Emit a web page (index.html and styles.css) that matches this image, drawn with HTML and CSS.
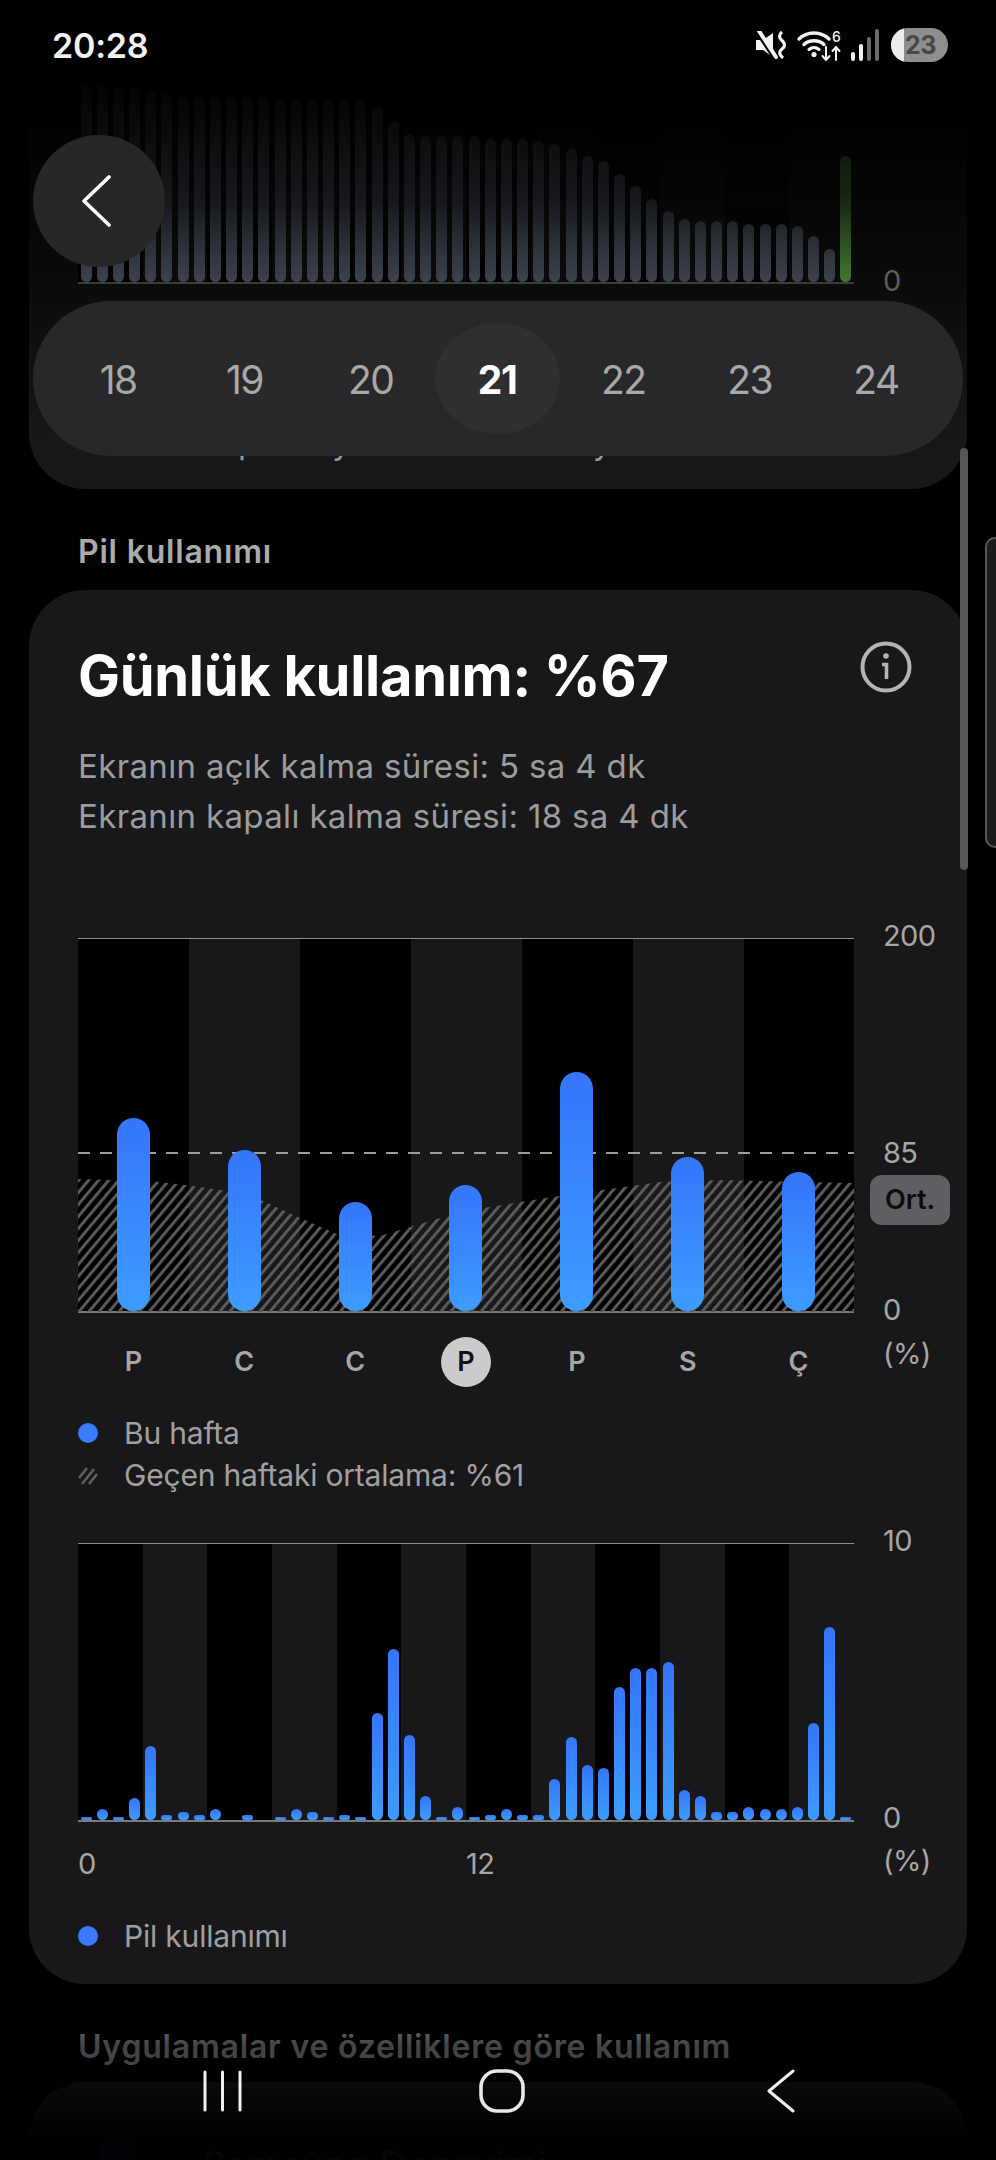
FILE: index.html

```html
<!DOCTYPE html>
<html lang="tr">
<head>
  <meta charset="utf-8">
  <title>Pil kullanımı</title>
  <link rel="stylesheet" href="styles.css">
</head>
<body>
<div class="screen">

  <!-- card scrolled up under the overlays -->
  <section class="summary-card">
    <div class="chart">
      <div class="plot-faded">
        <div class="bars bars-48">
          <i class="bar-grey" style="height:198px"></i><i class="bar-grey" style="height:198px"></i><i class="bar-grey" style="height:196px"></i><i class="bar-grey" style="height:196px"></i>
          <i class="bar-grey" style="height:191px"></i><i class="bar-grey" style="height:188px"></i><i class="bar-grey" style="height:186px"></i><i class="bar-grey" style="height:186px"></i>
          <i class="bar-grey" style="height:186px"></i><i class="bar-grey" style="height:186px"></i><i class="bar-grey" style="height:186px"></i><i class="bar-grey" style="height:186px"></i>
          <i class="bar-grey" style="height:183px"></i><i class="bar-grey" style="height:183px"></i><i class="bar-grey" style="height:183px"></i><i class="bar-grey" style="height:183px"></i>
          <i class="bar-grey" style="height:183px"></i><i class="bar-grey" style="height:181px"></i><i class="bar-grey" style="height:176px"></i><i class="bar-grey" style="height:161px"></i>
          <i class="bar-grey" style="height:148px"></i><i class="bar-grey" style="height:146px"></i><i class="bar-grey" style="height:146px"></i><i class="bar-grey" style="height:146px"></i>
          <i class="bar-grey" style="height:146px"></i><i class="bar-grey" style="height:143px"></i><i class="bar-grey" style="height:143px"></i><i class="bar-grey" style="height:143px"></i>
          <i class="bar-grey" style="height:141px"></i><i class="bar-grey" style="height:138px"></i><i class="bar-grey" style="height:133px"></i><i class="bar-grey" style="height:126px"></i>
          <i class="bar-grey" style="height:121px"></i><i class="bar-grey" style="height:108px"></i><i class="bar-grey" style="height:96px"></i><i class="bar-grey" style="height:83px"></i>
          <i class="bar-grey" style="height:71px"></i><i class="bar-grey" style="height:63px"></i><i class="bar-grey" style="height:61px"></i><i class="bar-grey" style="height:61px"></i>
          <i class="bar-grey" style="height:61px"></i><i class="bar-grey" style="height:58px"></i><i class="bar-grey" style="height:58px"></i><i class="bar-grey" style="height:58px"></i>
          <i class="bar-grey" style="height:56px"></i><i class="bar-grey" style="height:46px"></i><i class="bar-grey" style="height:33px"></i><i class="bar-green" style="height:126px"></i>
        </div>
      </div>
      <div class="summary-line"></div>
      <span class="tick tick-summary">0</span>
    </div>
    <p class="peek-line"><span class="peek-p">p</span><span class="peek-y1">y</span><span class="peek-y2">y</span></p>
  </section>

  <h2 class="section-title">Pil kullanımı</h2>

  <section class="usage-card">
    <div class="usage-head">
      <h1 class="usage-title">Günlük kullanım: %67</h1>
      <svg class="info-icon" viewBox="0 0 52 52" fill="none" stroke="#b4b4b4">
        <circle cx="26" cy="26" r="23.5" stroke-width="4"/>
        <path d="M22 23.5H26.5V38" stroke-width="3.6"/>
        <circle cx="26" cy="15" r="2.8" fill="#b4b4b4" stroke="none"/>
      </svg>
    </div>
    <p class="usage-line">Ekranın açık kalma süresi: 5 sa 4 dk</p>
    <p class="usage-line">Ekranın kapalı kalma süresi: 18 sa 4 dk</p>

    <!-- weekly chart -->
    <div class="chart week-chart">
      <div class="plot plot-week">
        <svg class="hatch-area" viewBox="0 0 776 373">
          <defs>
            <pattern id="hatch" width="7.7" height="10" patternUnits="userSpaceOnUse" patternTransform="rotate(40)">
              <rect width="3" height="10" fill="#5a5a5a"/>
            </pattern>
          </defs>
          <path fill="url(#hatch)" d="M0 240L72 242L115 247L149 252L185 262L222 279L259 295L302 297L359 280L405 269L481 257L582 243L640 241L776 244V373H0Z"/>
        </svg>
        <div class="dash-line"></div>
        <div class="bars bars-7">
          <i class="bar-blue" style="height:193px"></i>
          <i class="bar-blue" style="height:161px"></i>
          <i class="bar-blue" style="height:109px"></i>
          <i class="bar-blue" style="height:126px"></i>
          <i class="bar-blue" style="height:239px"></i>
          <i class="bar-blue" style="height:154px"></i>
          <i class="bar-blue" style="height:139px"></i>
        </div>
      </div>
      <span class="tick tick-200">200</span>
      <span class="tick tick-85">85</span>
      <span class="avg-badge">Ort.</span>
      <span class="tick tick-w0">0</span>
      <span class="tick tick-wpct">(%)</span>
      <div class="day-row">
        <span class="day">P</span>
        <span class="day">C</span>
        <span class="day">C</span>
        <span class="day day-today">P</span>
        <span class="day">P</span>
        <span class="day">S</span>
        <span class="day">Ç</span>
      </div>
    </div>

    <ul class="legend legend-week">
      <li><span class="dot"></span>Bu hafta</li>
      <li>
        <svg class="hatch-key" viewBox="0 0 20 20" fill="none" stroke="#5f5f5f" stroke-width="2.6">
          <path d="M1 13L9 3M4 19L16 4M11 19L19 9"/>
        </svg>
        Geçen haftaki ortalama: %61
      </li>
    </ul>

    <!-- hourly chart -->
    <div class="chart day-chart">
      <div class="plot plot-day">
        <div class="bars bars-48">
          <i class="bar-blue" style="height:3px"></i><i class="bar-blue" style="height:11px"></i><i class="bar-blue" style="height:3px"></i><i class="bar-blue" style="height:22px"></i>
          <i class="bar-blue" style="height:74px"></i><i class="bar-blue" style="height:5px"></i><i class="bar-blue" style="height:8px"></i><i class="bar-blue" style="height:5px"></i>
          <i class="bar-blue" style="height:11px"></i><i class="bar-blue" style="height:0"></i><i class="bar-blue" style="height:5px"></i><i class="bar-blue" style="height:0"></i>
          <i class="bar-blue" style="height:3px"></i><i class="bar-blue" style="height:11px"></i><i class="bar-blue" style="height:8px"></i><i class="bar-blue" style="height:3px"></i>
          <i class="bar-blue" style="height:5px"></i><i class="bar-blue" style="height:3px"></i><i class="bar-blue" style="height:107px"></i><i class="bar-blue" style="height:171px"></i>
          <i class="bar-blue" style="height:85px"></i><i class="bar-blue" style="height:24px"></i><i class="bar-blue" style="height:3px"></i><i class="bar-blue" style="height:13px"></i>
          <i class="bar-blue" style="height:3px"></i><i class="bar-blue" style="height:5px"></i><i class="bar-blue" style="height:11px"></i><i class="bar-blue" style="height:5px"></i>
          <i class="bar-blue" style="height:5px"></i><i class="bar-blue" style="height:41px"></i><i class="bar-blue" style="height:83px"></i><i class="bar-blue" style="height:55px"></i>
          <i class="bar-blue" style="height:52px"></i><i class="bar-blue" style="height:133px"></i><i class="bar-blue" style="height:152px"></i><i class="bar-blue" style="height:152px"></i>
          <i class="bar-blue" style="height:158px"></i><i class="bar-blue" style="height:30px"></i><i class="bar-blue" style="height:24px"></i><i class="bar-blue" style="height:8px"></i>
          <i class="bar-blue" style="height:8px"></i><i class="bar-blue" style="height:13px"></i><i class="bar-blue" style="height:11px"></i><i class="bar-blue" style="height:11px"></i>
          <i class="bar-blue" style="height:13px"></i><i class="bar-blue" style="height:97px"></i><i class="bar-blue" style="height:193px"></i><i class="bar-blue" style="height:3px"></i>
        </div>
      </div>
      <span class="tick tick-10">10</span>
      <span class="tick tick-d0">0</span>
      <span class="tick tick-dpct">(%)</span>
      <div class="hour-row">
        <span class="hour">0</span>
        <span class="hour">12</span>
      </div>
    </div>

    <ul class="legend legend-day">
      <li><span class="dot"></span>Pil kullanımı</li>
    </ul>
  </section>

  <h2 class="section-title section-title-next">Uygulamalar ve özelliklere göre kullanım</h2>

  <section class="apps-card">
    <span class="app-icon"></span>
    <span class="app-name">Samsung Deneyimi</span>
  </section>

  <!-- overlays -->
  <div class="bottom-fade"></div>

  <div class="status-bar">
    <span class="clock">20:28</span>
    <div class="status-icons">
      <svg class="ic-mute" viewBox="0 0 32 28">
        <path d="M1 9H8L18 2V26L8 19H1Z" fill="#f2f2f2"/>
        <path d="M0 -3L20 27" stroke="#000" stroke-width="5"/>
        <path d="M4 0L21 26" stroke="#f2f2f2" stroke-width="4" stroke-linecap="round"/>
        <path d="M27 1Q22 5 27 9.5T27 18Q22 22 28 27" fill="none" stroke="#f2f2f2" stroke-width="3.2"/>
      </svg>
      <svg class="ic-wifi" viewBox="0 0 44 32" fill="none" stroke="#f2f2f2" stroke-linecap="round">
        <path d="M2 10C10 2 24 2 32 10" stroke-width="3.4"/>
        <path d="M7 15.5C12.5 10.5 21.5 10.5 27 15.5" stroke-width="3.4"/>
        <path d="M12 20.5C15 18 19 18 22 20.5" stroke-width="3.2"/>
        <circle cx="17" cy="25.5" r="2.6" fill="#f2f2f2" stroke="none"/>
        <path d="M29 18V31M25.5 27L29 31L32.5 27" stroke-width="2"/>
        <path d="M39 31V18M35.5 22L39 18L42.5 22" stroke-width="2"/>
        <text class="wifi-six" x="35" y="13">6</text>
      </svg>
      <svg class="ic-signal" viewBox="0 0 28 32">
        <rect x="0" y="23" width="4" height="9" rx="2" fill="#f2f2f2"/>
        <rect x="8" y="15" width="4" height="17" rx="2" fill="#f2f2f2"/>
        <rect x="16" y="8" width="4" height="24" rx="2" fill="#6a6a6a"/>
        <rect x="24" y="0" width="4" height="32" rx="2" fill="#6a6a6a"/>
      </svg>
      <div class="battery"><span class="battery-fill"></span><span class="battery-num">23</span></div>
    </div>
  </div>

  <button class="back-btn">
    <svg viewBox="0 0 30 52" fill="none" stroke="#fff" stroke-width="3.6" stroke-linecap="round" stroke-linejoin="round">
      <path d="M27 2L2 26L27 50"/>
    </svg>
  </button>

  <div class="date-pill">
    <span class="date">18</span>
    <span class="date">19</span>
    <span class="date">20</span>
    <span class="date date-active">21</span>
    <span class="date">22</span>
    <span class="date">23</span>
    <span class="date">24</span>
  </div>

  <div class="scrollbar"></div>
  <div class="edge-handle"></div>

  <div class="nav-bar">
    <svg class="nav-recent" viewBox="0 0 39 42" stroke="#f0f0f0" stroke-width="3" stroke-linecap="round">
      <path d="M2 2V40M19.5 2V40M37 2V40"/>
    </svg>
    <svg class="nav-home" viewBox="0 0 46 44" fill="none" stroke="#e8e8e8" stroke-width="3.6">
      <rect x="2" y="2" width="42" height="40" rx="16"/>
    </svg>
    <svg class="nav-back" viewBox="0 0 28 44" fill="none" stroke="#f0f0f0" stroke-width="3" stroke-linecap="round" stroke-linejoin="round">
      <path d="M26 2L2 22L26 42"/>
    </svg>
  </div>
</div>
</body>
</html>
```

FILE: styles.css

```css
* {
  margin: 0;
  padding: 0;
  box-sizing: border-box;
}

body {
  background: #000;
  font-family: Inter, Roboto, "Liberation Sans", sans-serif;
}

.screen {
  position: relative;
  width: 996px;
  height: 2160px;
  overflow: hidden;
  background: #000;
}

/* cards */
.summary-card {
  height: 489px;
  margin: 0 29px;
  padding: 84px 49px 0;
  border-radius: 0 0 56px 56px;
  background: linear-gradient(to bottom, #000 100px, #0b0b0c 285px, #171719 440px);
}

.usage-card {
  height: 1394px;
  margin: 0 29px;
  padding: 54px 49px 0;
  border-radius: 56px;
  background: #18181a;
}

.apps-card {
  display: flex;
  align-items: flex-start;
  gap: 66px;
  height: 200px;
  margin: 17px 29px 0;
  padding: 58px 0 0 69px;
  border-radius: 56px;
  background: #18181a;
}

.app-icon {
  width: 38px;
  height: 38px;
  border-radius: 12px;
  background: #1f3f90;
}

.app-name {
  font-size: 38px;
  line-height: 50px;
  color: #888;
}

.section-title {
  margin: 45px 0 20px 78px;
  font-size: 32px;
  line-height: 36px;
  font-weight: 600;
  letter-spacing: 0.8px;
  color: #ababab;
}

.section-title-next {
  margin: 45px 0 0 78px;
}

.peek-line {
  display: flex;
  margin-top: 138px;
  font-size: 33px;
  line-height: 40px;
  color: #999;
}

.peek-p { margin-left: 160px; }
.peek-y1 { margin-left: 74px; }
.peek-y2 { margin-left: 242px; }

/* title block */
.usage-head {
  display: flex;
  justify-content: space-between;
  align-items: flex-start;
  margin-bottom: 33px;
}

.usage-title {
  font-size: 56px;
  line-height: 64px;
  font-weight: 700;
  letter-spacing: -0.3px;
  color: #fff;
}

.info-icon {
  width: 52px;
  height: 52px;
  margin: -3px 6px 0 0;
}

.usage-line {
  font-size: 33px;
  line-height: 50px;
  letter-spacing: 0.35px;
  color: #9c9c9c;
}

/* charts */
.chart {
  position: relative;
  width: 776px;
}

.plot-faded {
  height: 198px;
  background: repeating-linear-gradient(90deg, #000 0 64.67px, transparent 64.67px 129.33px);
  -webkit-mask-image: linear-gradient(to bottom, rgba(0, 0, 0, 0.05), rgba(0, 0, 0, 0.3) 60%, #000);
  mask-image: linear-gradient(to bottom, rgba(0, 0, 0, 0.05), rgba(0, 0, 0, 0.3) 60%, #000);
}

.plot-faded .bars {
  height: 100%;
}

.summary-line {
  height: 1.5px;
  background: #3c3c3c;
}

.plot {
  position: relative;
  border-top: 1.5px solid #8c8c8c;
  border-bottom: 2px solid #7a7a7a;
}

.plot-week {
  height: 375px;
  background: repeating-linear-gradient(90deg, #000 0 111px, transparent 111px 222px);
}

.plot-day {
  height: 279px;
  background: repeating-linear-gradient(90deg, #000 0 64.67px, transparent 64.67px 129.33px);
}

.week-chart {
  margin-top: 97px;
}

.day-chart {
  margin-top: 47px;
}

.bars {
  position: relative;
  display: grid;
  align-items: end;
  justify-items: center;
  height: 100%;
}

.bars-48 {
  grid-template-columns: repeat(48, 1fr);
}

.bars-7 {
  grid-template-columns: repeat(7, 1fr);
}

.bars-48 i {
  width: 11px;
  border-radius: 6px;
}

.bars-7 i {
  width: 33px;
  border-radius: 17px;
}

.bar-grey {
  background: #3c434f;
}

.bar-green {
  background: #42782f;
}

.bar-blue {
  background: linear-gradient(to bottom, #3575fb, #3d9cff);
}

.hatch-area {
  position: absolute;
  left: 0;
  top: 0;
  width: 776px;
  height: 373px;
}

.dash-line {
  position: absolute;
  left: 0;
  right: 0;
  top: 213px;
  height: 2px;
  background: repeating-linear-gradient(90deg, #9c9c9c 0 12px, transparent 12px 22px);
}

/* axis labels sit beside the plots at their value */
.tick {
  position: absolute;
  left: 805px;
  font-size: 29px;
  line-height: 36px;
  letter-spacing: -0.6px;
  color: #a6a6a6;
  white-space: nowrap;
}

.tick-summary { top: 179px; color: #5c5c5c; }
.tick-200 { top: -20px; }
.tick-85 { top: 197px; }
.tick-w0 { top: 354px; }
.tick-wpct { top: 398px; }
.tick-10 { top: -20px; }
.tick-d0 { top: 257px; }
.tick-dpct { top: 300px; }

.avg-badge {
  position: absolute;
  left: 792px;
  top: 237px;
  width: 80px;
  height: 50px;
  border-radius: 12px;
  background: #5e5e63;
  font-size: 27px;
  font-weight: 600;
  line-height: 50px;
  text-align: center;
  color: #0c0c0c;
}

.day-row {
  display: grid;
  grid-template-columns: repeat(7, 1fr);
  justify-items: center;
  margin-top: 24px;
}

.day {
  width: 50px;
  height: 50px;
  border-radius: 50%;
  font-size: 27px;
  font-weight: 600;
  line-height: 50px;
  text-align: center;
  color: #a6a6a6;
}

.day-today {
  background: #cbcbcd;
  color: #111;
}

.hour-row {
  display: grid;
  grid-template-columns: 1fr 1fr;
  margin-top: 24px;
}

.hour {
  font-size: 29px;
  line-height: 36px;
  letter-spacing: -0.6px;
  color: #a6a6a6;
}

/* legends */
.legend {
  list-style: none;
}

.legend li {
  display: flex;
  align-items: center;
  gap: 26px;
  height: 42px;
  font-size: 30px;
  letter-spacing: -0.2px;
  color: #a0a0a0;
}

.legend-week { margin-top: 25px; }
.legend-day { margin-top: 33px; }

.dot {
  width: 20px;
  height: 20px;
  border-radius: 50%;
  background: #3b7bff;
}

.hatch-key {
  width: 20px;
  height: 20px;
}

/* status bar */
.status-bar {
  position: absolute;
  left: 0;
  right: 0;
  top: 28px;
  display: flex;
  justify-content: space-between;
  align-items: center;
  height: 34px;
  padding: 0 48px 0 52px;
}

.clock {
  font-size: 34px;
  font-weight: 600;
  letter-spacing: -0.2px;
  color: #f2f2f2;
}

.status-icons {
  display: flex;
  align-items: center;
  gap: 10px;
}

.ic-mute { width: 32px; height: 28px; }
.ic-wifi { width: 44px; height: 32px; overflow: visible; }
.ic-signal { width: 28px; height: 32px; margin-right: 2px; }

.wifi-six {
  font-size: 14px;
  font-weight: 500;
  fill: #f2f2f2;
  stroke: none;
}

.battery {
  position: relative;
  width: 57px;
  height: 34px;
  overflow: hidden;
  border-radius: 17px;
  background: #8e8e8e;
  font-size: 25px;
  font-weight: 700;
  line-height: 35px;
  color: #474747;
}

.battery-fill {
  position: absolute;
  left: 0;
  top: 0;
  bottom: 0;
  width: 13px;
  background: #ececec;
}

.battery-num {
  position: absolute;
  left: 14px;
  letter-spacing: -0.5px;
}

/* floating controls */
.back-btn {
  position: absolute;
  left: 33px;
  top: 135px;
  display: flex;
  justify-content: center;
  align-items: center;
  width: 132px;
  height: 132px;
  padding-right: 4px;
  border: 0;
  border-radius: 50%;
  background: #272728;
}

.back-btn svg {
  width: 30px;
  height: 52px;
}

.date-pill {
  position: absolute;
  left: 33px;
  top: 301px;
  display: grid;
  grid-template-columns: repeat(7, 126.3px);
  align-items: center;
  justify-items: center;
  width: 930px;
  height: 155px;
  padding-left: 22px;
  border-radius: 78px;
  background: #28282a;
}

.date {
  width: 125px;
  height: 111px;
  border-radius: 50%;
  font-size: 39px;
  line-height: 113px;
  letter-spacing: -1.5px;
  text-align: center;
  color: #a8a8a8;
}

.date-active {
  background: #2f2f30;
  font-weight: 700;
  color: #fff;
}

.scrollbar {
  position: absolute;
  left: 960px;
  top: 448px;
  width: 8px;
  height: 422px;
  border-radius: 4px;
  background: #57575a;
}

.edge-handle {
  position: absolute;
  left: 985px;
  top: 537px;
  width: 14px;
  height: 311px;
  border: 2px solid #58585a;
  border-radius: 10px 0 0 10px;
  background: #1b1b1c;
}

.bottom-fade {
  position: absolute;
  left: 0;
  right: 0;
  top: 1990px;
  bottom: 0;
  background: linear-gradient(to bottom, rgba(0, 0, 0, 0) 0, rgba(0, 0, 0, 0.6) 55px, rgba(0, 0, 0, 0.62) 95px, rgba(0, 0, 0, 0.95) 150px);
}

.nav-bar {
  position: absolute;
  left: 203px;
  top: 2069px;
  display: flex;
  align-items: center;
}

.nav-recent { width: 39px; height: 42px; }
.nav-home { width: 46px; height: 44px; margin-left: 237px; }
.nav-back { width: 28px; height: 44px; margin-left: 242px; }
```
